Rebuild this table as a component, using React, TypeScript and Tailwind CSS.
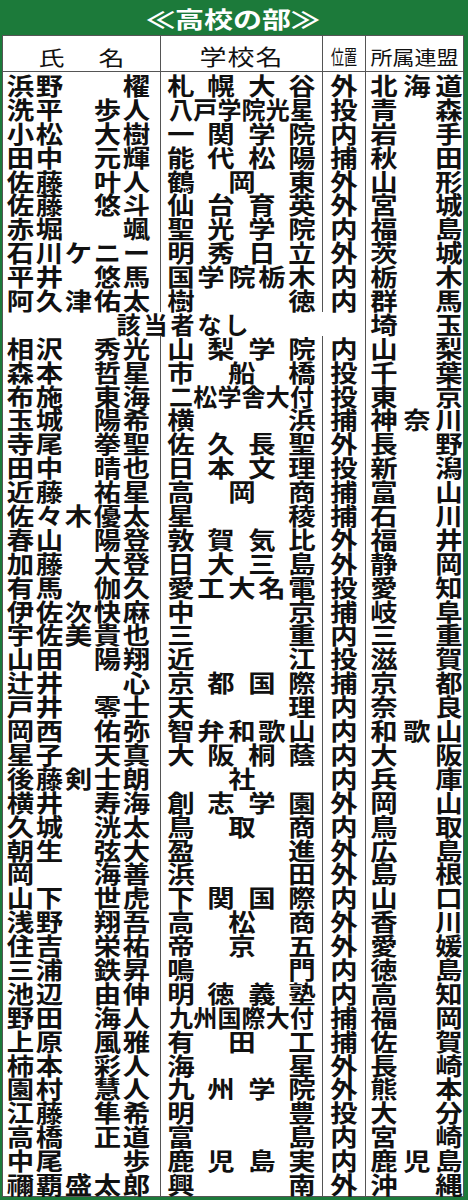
import React from 'react'

type Row = [string, string, string, string, string]

// 氏, 名, 学校名, 位置, 所属連盟 — null marks the "該当者なし" line
const rows: (Row | null)[] = [
  ['浜野', '櫂', '札幌大谷', '外', '北海道'],
  ['洗平', '歩人', '八戸学院光星', '投', '青森'],
  ['小松', '大樹', '一関学院', '内', '岩手'],
  ['田中', '元輝', '能代松陽', '捕', '秋田'],
  ['佐藤', '叶人', '鶴岡東', '外', '山形'],
  ['佐藤', '悠斗', '仙台育英', '外', '宮城'],
  ['赤堀', '颯', '聖光学院', '内', '福島'],
  ['石川', 'ケニー', '明秀日立', '外', '茨城'],
  ['平井', '悠馬', '国学院栃木', '内', '栃木'],
  ['阿久津', '佑太', '樹徳', '内', '群馬'],
  null,
  ['相沢', '秀光', '山梨学院', '内', '山梨'],
  ['森本', '哲星', '市船橋', '投', '千葉'],
  ['布施', '東海', '二松学舎大付', '投', '東京'],
  ['玉城', '陽希', '横浜', '捕', '神奈川'],
  ['寺尾', '拳聖', '佐久長聖', '外', '長野'],
  ['田中', '晴也', '日本文理', '投', '新潟'],
  ['近藤', '祐星', '高岡商', '捕', '富山'],
  ['佐々木', '優太', '星稜', '捕', '石川'],
  ['春山', '陽登', '敦賀気比', '外', '福井'],
  ['加藤', '大登', '日大三島', '外', '静岡'],
  ['有馬', '伽久', '愛工大名電', '投', '愛知'],
  ['伊佐次', '快麻', '中京', '捕', '岐阜'],
  ['宇佐美', '貴也', '三重', '内', '三重'],
  ['山田', '陽翔', '近江', '投', '滋賀'],
  ['辻井', '心', '京都国際', '捕', '京都'],
  ['戸井', '零士', '天理', '内', '奈良'],
  ['岡西', '佑弥', '智弁和歌山', '内', '和歌山'],
  ['星子', '天真', '大阪桐蔭', '内', '大阪'],
  ['後藤', '剣士朗', '社', '内', '兵庫'],
  ['横井', '寿海', '創志学園', '外', '岡山'],
  ['久城', '洸太', '鳥取商', '内', '鳥取'],
  ['朝生', '弦大', '盈進', '外', '広島'],
  ['岡', '海善', '浜田', '外', '島根'],
  ['山下', '世虎', '下関国際', '内', '山口'],
  ['浅野', '翔吾', '高松商', '外', '香川'],
  ['住吉', '栄祐', '帝京五', '外', '愛媛'],
  ['三浦', '鉄昇', '鳴門', '内', '徳島'],
  ['池辺', '由伸', '明徳義塾', '内', '高知'],
  ['野田', '海人', '九州国際大付', '捕', '福岡'],
  ['上原', '風雅', '有田工', '捕', '佐賀'],
  ['柿本', '彩人', '海星', '外', '長崎'],
  ['園村', '慧人', '九州学院', '外', '熊本'],
  ['江藤', '隼希', '明豊', '投', '大分'],
  ['高橋', '正道', '富島', '内', '宮崎'],
  ['中尾', '歩', '鹿児島実', '内', '鹿児島'],
  ['禰覇', '盛太郎', '興南', '外', '沖縄'],
]

// family name from the left, given name against the right, on a 5-cell grid
function NameCells({ family, given }: { family: string; given: string }) {
  const cells = ['', '', '', '', '']
  family.split('').forEach((c, i) => (cells[i] = c))
  given.split('').forEach((c, i) => (cells[5 - given.length + i] = c))
  return (
    <div className="grid grid-cols-[repeat(5,29px)] pl-[3px]">
      {cells.map((c, i) => (
        <span key={i} className="flex scale-x-[1.14] justify-center">
          {c}
        </span>
      ))}
    </div>
  )
}

// spread characters across the cell (均等割り)
function Spread({ text }: { text: string }) {
  const chars = text.split('')
  const tight = chars.length >= 6
  return (
    <div className={`flex ${chars.length === 1 ? 'justify-center' : 'justify-between'}`}>
      {chars.map((c, i) => (
        <span
          key={i}
          className={`flex w-[24px] justify-center ${tight ? 'scale-x-[1.0]' : 'scale-x-[1.14]'}`}
        >
          {c}
        </span>
      ))}
    </div>
  )
}

export default function App() {
  return (
    <div className="w-[468px] bg-[#1c7a3a] pb-[3px] pl-[2px] pr-[4px] font-['Noto_Sans_CJK_JP',sans-serif] text-[#111]">
      <div className="flex h-[35px] items-center justify-center text-white">
        <span className="scale-y-[0.8] text-[29px] leading-none font-bold">≪高校の部≫</span>
      </div>

      <div className="border border-[#555] bg-white">
        {/* header */}
        <div className="grid h-[36px] grid-cols-[158px_162px_43px_1fr] border-b border-[#555]">
          <div className="flex items-center justify-center gap-[34px] border-r border-[#555] text-[26px]">
            <span className="scale-y-[0.8]">氏</span>
            <span className="scale-y-[0.8]">名</span>
          </div>
          <div className="flex items-center justify-center border-r border-[#555] text-[27px]">
            <span className="scale-y-[0.78] tracking-[1px]">学校名</span>
          </div>
          <div className="flex items-center justify-center border-r border-[#555] text-[21px]">
            <span className="scale-x-[0.62] scale-y-[0.95]">位置</span>
          </div>
          <div className="flex items-center justify-center text-[22px]">
            <span className="scale-y-[0.9]">所属連盟</span>
          </div>
        </div>

        {/* body */}
        <div className="flex h-[1124px] flex-col pt-[1px] text-[24px] leading-[23.9px] font-semibold">
          {rows.map((r, i) =>
            r ? (
              <div key={i} className="grid h-[23.9px] shrink-0 grid-cols-[158px_162px_43px_1fr]">
                <div className="border-r border-[#555]">
                  <NameCells family={r[0]} given={r[1]} />
                </div>
                <div className="border-r border-[#555] px-[8px]">
                  <Spread text={r[2]} />
                </div>
                <div className="flex justify-center border-r border-[#555]">
                  <span className="scale-x-[1.14]">{r[3]}</span>
                </div>
                <div className="pl-[6px] pr-[2px]">
                  <Spread text={r[4]} />
                </div>
              </div>
            ) : (
              <div key={i} className="grid h-[23.9px] shrink-0 grid-cols-[158px_162px_43px_1fr]">
                <div className="col-span-3 flex justify-center border-r border-[#555] tracking-[3px]">
                  該当者なし
                </div>
                <div className="pl-[6px] pr-[2px]">
                  <Spread text="埼玉" />
                </div>
              </div>
            )
          )}
        </div>
      </div>
    </div>
  )
}
